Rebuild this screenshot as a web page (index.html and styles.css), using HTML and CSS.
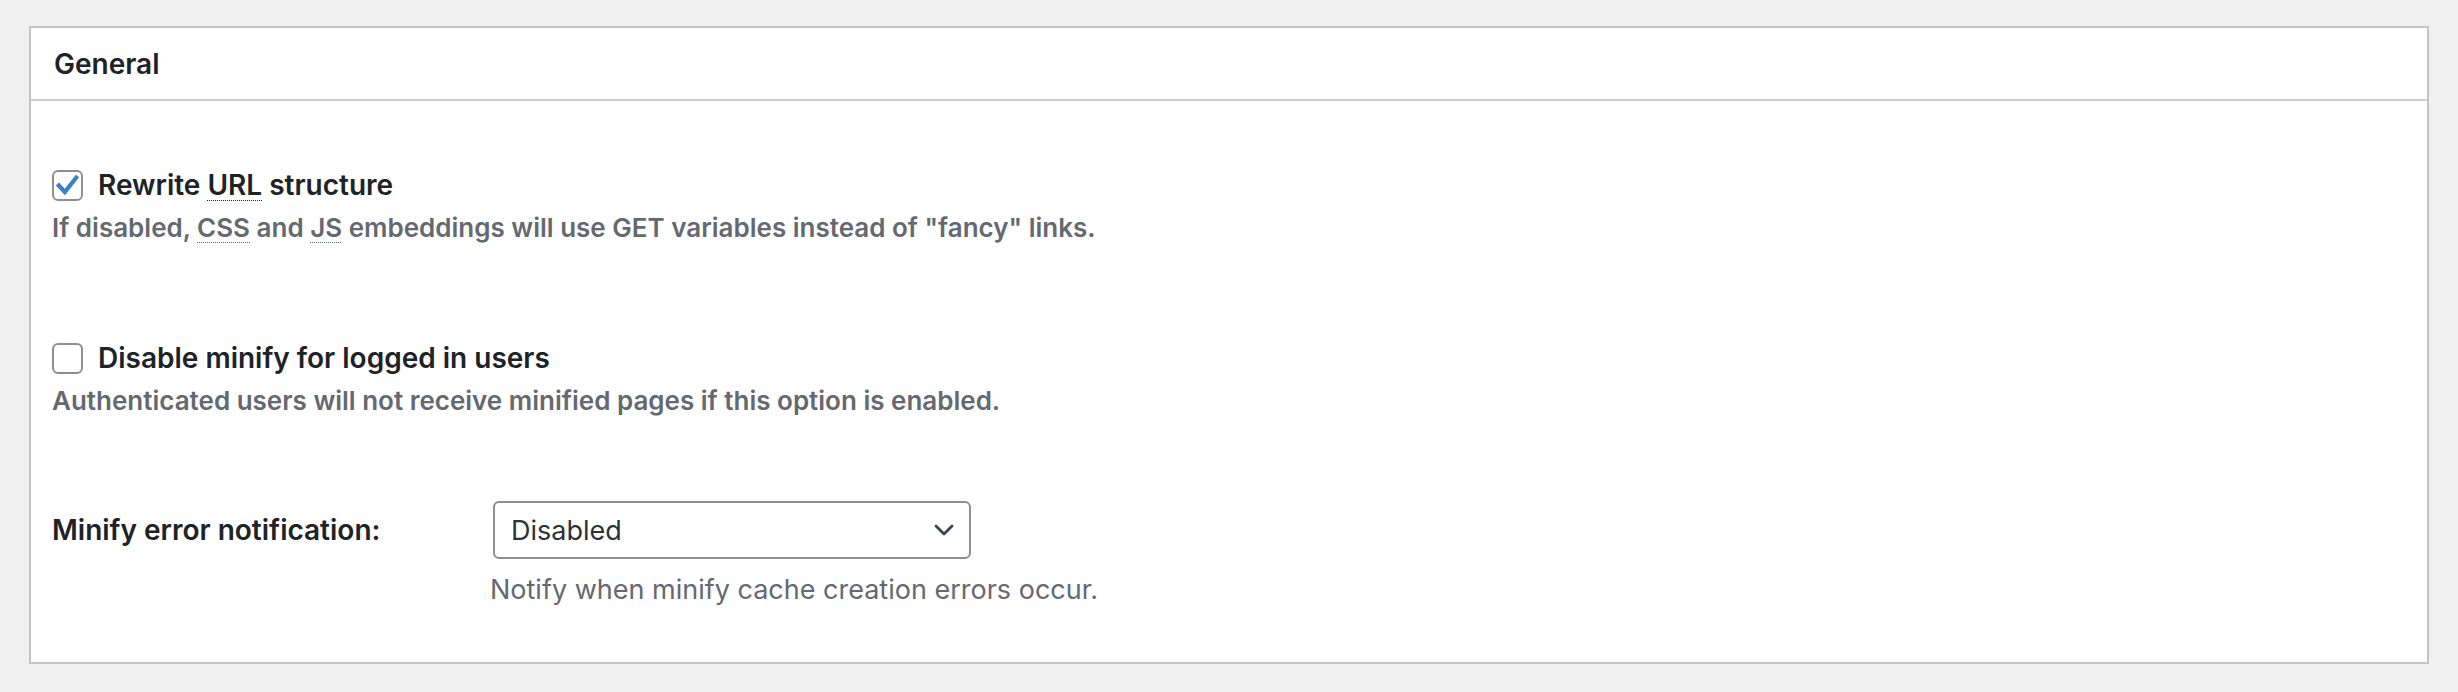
FILE: index.html
```html
<!DOCTYPE html>
<html lang="en">
<head>
<meta charset="utf-8">
<title>General</title>
<link rel="stylesheet" href="styles.css">
</head>
<body>
<div class="postbox">
  <h3 class="postbox-title">General</h3>
  <div class="inside">
    <div class="option">
      <label class="check-row">
        <span class="checkbox is-checked">
          <svg viewBox="0 0 31 31" width="29" height="29" aria-hidden="true"><path d="M5.5 15.5 L12.5 23 L25.5 6.5" fill="none" stroke="#3582c4" stroke-width="4.8" stroke-linecap="square" stroke-linejoin="miter"/></svg>
        </span>
        <span class="label-text">Rewrite <abbr class="abbr">URL</abbr> structure</span>
      </label>
      <p class="description">If disabled, <abbr class="abbr">CSS</abbr> and <abbr class="abbr">JS</abbr> embeddings will use GET variables instead of "fancy" links.</p>
    </div>
    <div class="option option-second">
      <label class="check-row">
        <span class="checkbox"></span>
        <span class="label-text">Disable minify for logged in users</span>
      </label>
      <p class="description">Authenticated users will not receive minified pages if this option is enabled.</p>
    </div>
    <div class="field-grid">
      <span class="field-label">Minify error notification:</span>
      <div class="select">
        <span class="select-value">Disabled</span>
        <svg class="chevron" viewBox="0 0 20 12" width="20" height="12" aria-hidden="true"><path d="M2 2 L10 10 L18 2" fill="none" stroke="#3c434a" stroke-width="2.8" stroke-linecap="round" stroke-linejoin="round"/></svg>
      </div>
      <span class="field-spacer"></span>
      <p class="field-help">Notify when minify cache creation errors occur.</p>
    </div>
  </div>
</div>
</body>
</html>
```
FILE: styles.css
```css
html, body {
  margin: 0;
  padding: 0;
  background: #f0f0f1;
}

body {
  font-family: Inter, "Noto Sans", "Liberation Sans", sans-serif;
  color: #1d2327;
}

.postbox {
  margin: 26px 29px 0 29px;
  background: #ffffff;
  border: 2px solid #c3c4c7;
}

.postbox-title {
  margin: 0;
  height: 71px;
  line-height: 73px;
  padding: 0 0 0 23px;
  font-size: 28px;
  font-weight: 600;
  color: #1d2327;
  border-bottom: 2px solid #cbcfd4;
}

.inside {
  padding: 69px 21px 54px 21px;
}

.option-second {
  margin-top: 97px;
}

.check-row {
  display: flex;
  align-items: center;
  gap: 15px;
  height: 31px;
}

.checkbox {
  box-sizing: border-box;
  width: 31px;
  height: 31px;
  border: 2px solid #8c8f94;
  border-radius: 6px;
  display: flex;
  align-items: center;
  justify-content: center;
  background: #fff;
}

.label-text {
  font-size: 28px;
  font-weight: 600;
  line-height: 31px;
  color: #1d2327;
}

.abbr {
  text-decoration: underline dotted;
  text-decoration-thickness: 1px;
  text-underline-offset: 5px;
}

.description {
  margin: 9px 0 0 0;
  font-size: 26px;
  font-weight: 600;
  line-height: 36px;
  color: #646970;
}

.field-grid {
  margin-top: 82px;
  display: grid;
  grid-template-columns: 441px 478px;
  align-items: center;
}

.field-label {
  font-size: 28px;
  font-weight: 600;
  color: #1d2327;
}

.select {
  box-sizing: border-box;
  height: 58px;
  border: 2px solid #8c8f94;
  border-radius: 6px;
  display: flex;
  align-items: center;
  justify-content: space-between;
  padding: 0 15px 0 16px;
  background: #fff;
}

.select-value {
  font-size: 27px;
  color: #2c3338;
}

.field-help {
  margin: 13px 0 0 -3px;
  font-size: 27px;
  line-height: 36px;
  color: #646970;
  white-space: nowrap;
}
```
